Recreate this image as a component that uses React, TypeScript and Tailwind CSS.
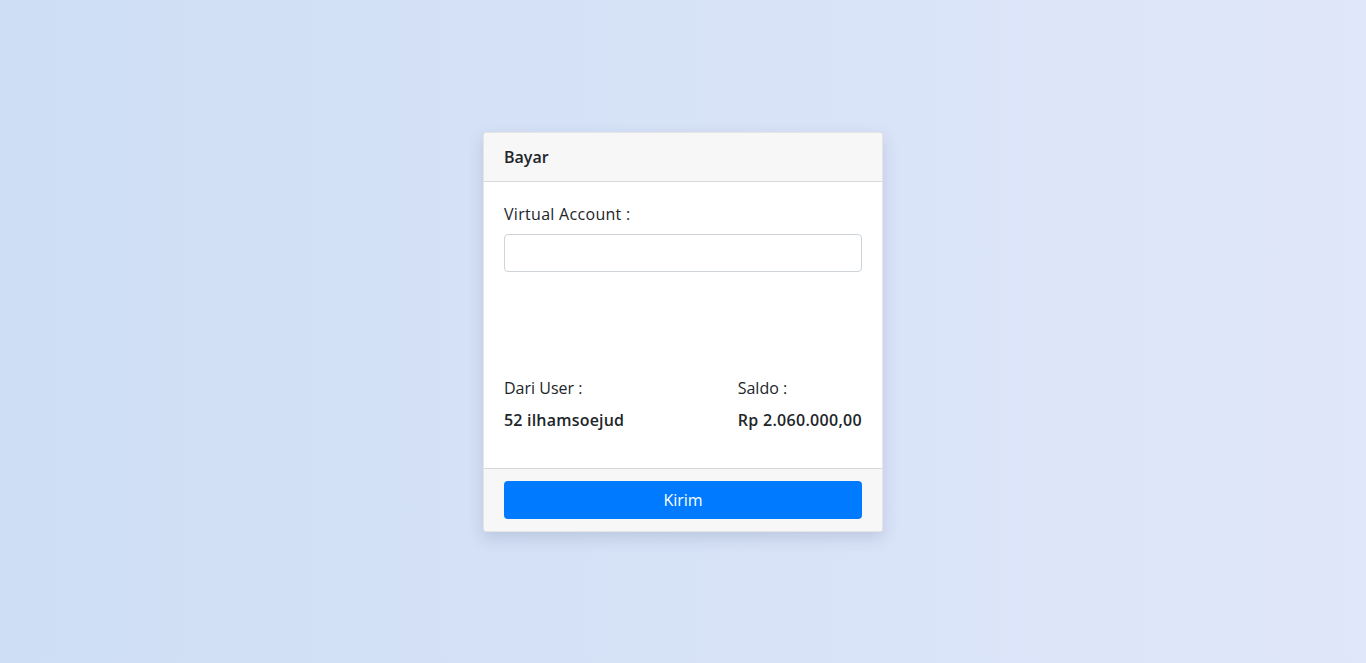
export default function App() {
  return (
    <div
      className="min-h-screen w-full flex items-center justify-center bg-gradient-to-r from-[#cedef4] to-[#e0e7fa] text-[#212529]"
      style={{ fontFamily: '"Open Sans", "Liberation Sans", sans-serif' }}
    >
      <div className="w-[400px] bg-white rounded-[4px] border border-black/10 shadow-[0_6px_16px_rgba(60,80,120,0.18)] overflow-hidden">
        {/* header */}
        <div className="bg-[#f7f7f7] border-b border-black/[0.125] px-5 py-3 h-[49px] text-[16px] leading-6 font-semibold">
          Bayar
        </div>

        {/* body */}
        <div className="p-5">
          <div className="text-[16px] leading-6 mb-2 tracking-[0.3px]">Virtual Account :</div>
          <input
            type="text"
            className="w-full h-[38px] border border-[#ced4da] rounded-[4px] px-3 outline-none"
          />

          <div className="mt-[104px] flex justify-between">
            <div>
              <div className="text-[16px] leading-6 mb-2">Dari User :</div>
              <div className="text-[16px] leading-6 font-semibold mb-4 tracking-[0.2px]">52 ilhamsoejud</div>
            </div>
            <div>
              <div className="text-[16px] leading-6 mb-2">Saldo :</div>
              <div className="text-[16px] leading-6 font-semibold mb-4 tracking-[0.3px]">Rp 2.060.000,00</div>
            </div>
          </div>
        </div>

        {/* footer */}
        <div className="bg-[#f7f7f7] border-t border-black/[0.125] px-5 py-3">
          <button className="w-full h-[38px] bg-[#007bff] text-white rounded-[4px] text-[16px]">
            Kirim
          </button>
        </div>
      </div>
    </div>
  );
}
